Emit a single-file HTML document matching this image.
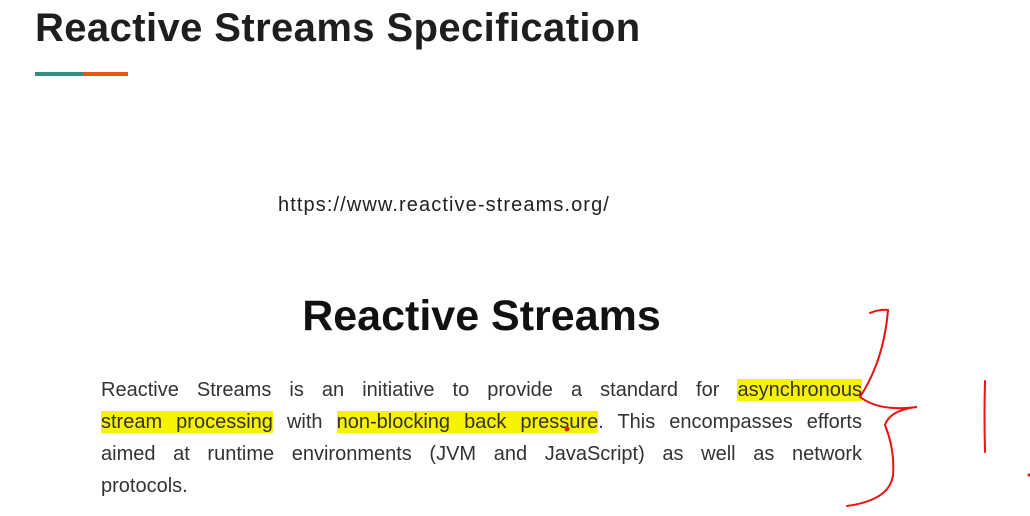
<!DOCTYPE html>
<html><head><meta charset="utf-8"><style>
body{margin:0;width:1030px;height:516px;background:#fff;position:relative;overflow:hidden;font-family:"Liberation Sans",sans-serif}
.t{position:absolute;left:35px;top:6px;font-size:40px;font-weight:bold;color:#1e1e1e;white-space:nowrap;letter-spacing:0.4px}
.bar1{position:absolute;left:35px;top:72px;width:48px;height:4px;background:#2f8f7f}
.bar2{position:absolute;left:83px;top:72px;width:45px;height:4px;background:#e8551b}
.url{position:absolute;left:278px;top:194px;font-size:20px;color:#222;white-space:nowrap;letter-spacing:1.1px}
.h{position:absolute;left:0;width:963px;text-align:center;top:292px;font-size:43px;font-weight:bold;color:#111}
.ln{position:absolute;left:101px;width:761px;font-size:20px;color:#333;text-align:justify;text-align-last:justify;white-space:nowrap;line-height:24px}
.ln.last{text-align-last:left}
.hl{background:#f6f200}
svg{position:absolute;left:0;top:0}
</style></head><body>
<div class="t">Reactive Streams Specification</div>
<div class="bar1"></div><div class="bar2"></div>
<div class="url">https://www.reactive-streams.org/</div>
<div class="h">Reactive Streams</div>
<div class="ln" style="top:378px">Reactive Streams is an initiative to provide a standard for <span class="hl">asynchronous</span></div>
<div class="ln" style="top:410px"><span class="hl">stream processing</span> with <span class="hl">non-blocking back pressure</span>. This encompasses efforts</div>
<div class="ln" style="top:442px">aimed at runtime environments (JVM and JavaScript) as well as network</div>
<div class="ln last" style="top:474px">protocols.</div>
<svg width="1030" height="516">
<g fill="none" stroke="#f01010" stroke-width="2" stroke-linecap="round">
<path d="M870 313 Q880 309 888 310 Q884 360 860 397 Q880 412 917 407 Q890 410 885 425 Q895 450 893 475 Q890 500 847 506"/>
<path d="M985 381 Q984 415 985 452"/>
</g>
<circle cx="567" cy="429" r="2.5" fill="#e02010"/>
<circle cx="1029" cy="475" r="1.5" fill="#f01010"/>
</svg>
</body></html>
